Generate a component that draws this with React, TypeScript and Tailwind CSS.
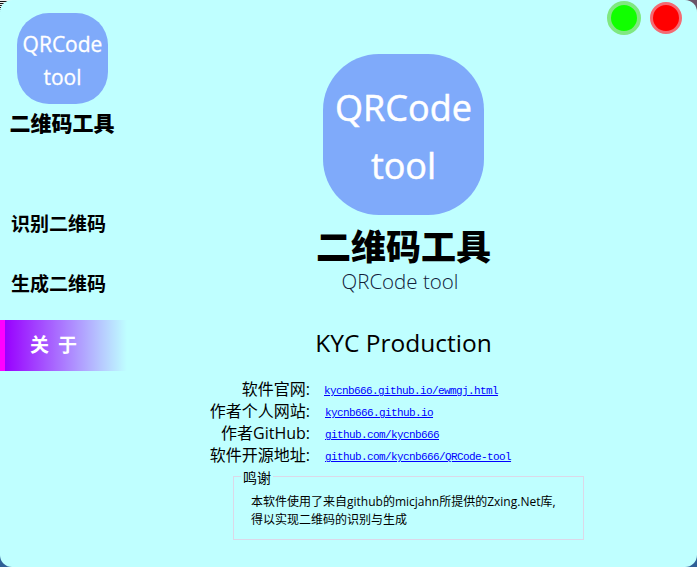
import React from "react";

const ui = "font-['Open_Sans','Noto_Sans_CJK_SC',sans-serif]";

const links = [
  { label: "软件官网:", url: "kycnb666.github.io/ewmgj.html", nudge: "pl-[14px]" },
  { label: "作者个人网站:", url: "kycnb666.github.io", nudge: "pl-[15px]" },
  { label: "作者GitHub:", url: "github.com/kycnb666", nudge: "pl-[15px]" },
  { label: "软件开源地址:", url: "github.com/kycnb666/QRCode-tool", nudge: "pl-[15px]" },
];

const Logo = ({ big }: { big?: boolean }) => (
  <div
    className={
      big
        ? "flex h-[161px] w-[161px] flex-col items-center justify-center rounded-[56px] bg-[#7faafa] pt-[5px] text-[36px] leading-[58px] font-medium text-white [-webkit-text-stroke:0.5px_white]"
        : "flex h-[91px] w-[91px] flex-col items-center justify-center rounded-[32px] bg-[#7faafa] pt-[5px] pl-[1px] text-[21px] leading-[33px] font-medium text-white [-webkit-text-stroke:0.3px_white]"
    }
  >
    <span>QRCode</span>
    <span>tool</span>
  </div>
);

const Sidebar = () => (
  <div className="flex w-[127px] shrink-0 flex-col">
    <div className="flex flex-col items-center pt-[13px] pr-[3px]">
      <Logo />
      <h2 className="mt-[5px] text-[21px] leading-[28px] font-black text-black">二维码工具</h2>
    </div>
    <a className="mt-[74px] pl-[11px] text-[19px] leading-[26px] font-bold text-black">识别二维码</a>
    <a className="mt-[34px] pl-[11px] text-[19px] leading-[26px] font-bold text-black">生成二维码</a>
    <a className="mt-[23px] flex h-[51px] items-center gap-[9px] border-l-[5px] border-[#ff00ff] bg-gradient-to-r from-[#9900ff] to-transparent pl-[25px] text-[19px] font-bold text-white">
      <span>关</span>
      <span>于</span>
    </a>
  </div>
);

const App = () => {
  return (
    <div className="relative h-[567px] w-[697px] overflow-hidden bg-gradient-to-b from-[#6b5468] from-10% to-[#2f5f96] to-90%">
      {/* bit of desktop showing through the top left corner */}
      <div className="absolute top-0 left-0 h-[12px] w-[12px] bg-[repeating-linear-gradient(0deg,#111_0px,#111_1px,#eee_1px,#eee_2px)]" />
      <div className={`relative flex h-[567px] w-[697px] rounded-[12px] bg-[#bfffff] ${ui}`}>
        <Sidebar />
        <div className="flex flex-1 flex-col items-center pt-[54px] pr-[17px]">
          <Logo big />
          <h1 className="mt-[9px] text-[35px] leading-[45px] font-black text-black">二维码工具</h1>
          <p className="ml-[-7px] text-[20.5px] leading-[24px] font-light text-[#10203a]">QRCode tool</p>
          <p className="mt-[33px] text-[24.5px] leading-[34px] text-black">KYC Production</p>
          <div className="mt-[18px] flex w-full flex-col">
            {links.map((row) => (
              <div key={row.url} className="flex h-[22px] items-center">
                <span className="w-[183px] text-right text-[16px] text-black">{row.label}</span>
                <a className={`${row.nudge} pt-[5px] font-['Liberation_Mono',monospace] text-[11px] tracking-[-0.6px] text-[#0000ff] underline`}>
                  {row.url}
                </a>
              </div>
            ))}
          </div>
          <fieldset className="mt-[1px] ml-[106px] h-[73px] w-[351px] self-start border border-[#dcd8e8] pr-2 pl-[17px]">
            <legend className="ml-[-10px] px-[2px] pt-[4px] text-[14px] leading-[14px] text-black">鸣谢</legend>
            <p className="mt-[8px] text-[12px] leading-[18px] text-black">
              本软件使用了来自github的micjahn所提供的Zxing.Net库,
              <br />
              得以实现二维码的识别与生成
            </p>
          </fieldset>
        </div>
        <div className="absolute top-[1px] right-[15px] flex items-start gap-[9px]">
          <span className="h-[34px] w-[34px] rounded-full border-[4px] border-[#80e880] bg-[#11ff00]" />
          <span className="mt-[1px] h-[32px] w-[32px] rounded-full border-[3px] border-[#f46a72] bg-[#ff0000]" />
        </div>
      </div>
    </div>
  );
};

export default App;
